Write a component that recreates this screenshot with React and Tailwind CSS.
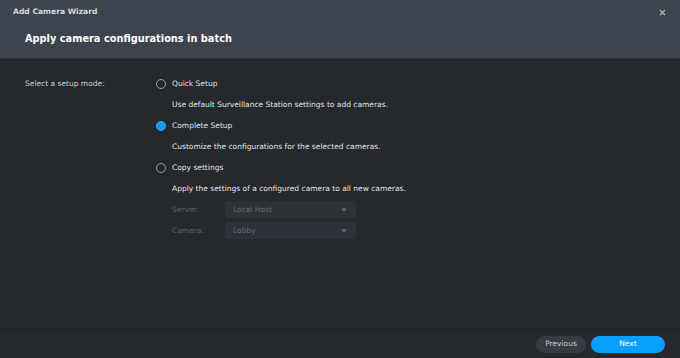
import React from "react";

const font = { fontFamily: '"DejaVu Sans", Verdana, sans-serif' };

function Radio({ checked }) {
  return checked ? (
    <span className="w-[10px] h-[10px] rounded-full bg-[#0a9bf5] border border-[#3aa9f0]" />
  ) : (
    <span className="w-[10px] h-[10px] rounded-full border border-[#9a9ea4]" />
  );
}

function Caret() {
  return (
    <svg width="6" height="4" viewBox="0 0 6 4">
      <path d="M0 0.5 L6 0.5 L3 3.5 Z" fill="#6a6e74" />
    </svg>
  );
}

export default function App() {
  return (
    <div className="w-[680px] h-[358px] bg-[#25282d] flex flex-col text-[#e4e5e7]" style={font}>
      <div className="h-[59px] bg-[#3e444d] flex flex-col border-b border-[#30343a]">
        <div className="h-[24px] flex items-center justify-between pl-[13px] pr-[14px]">
          <span className="text-[7.6px] font-bold text-[#d5d7da]">Add Camera Wizard</span>
          <svg width="7" height="7" viewBox="0 0 7 7">
            <path d="M1 1 L6 6 M6 1 L1 6" stroke="#aeb2b8" strokeWidth="1.4" />
          </svg>
        </div>
        <div className="h-[30px] flex items-center pl-[25px]">
          <span className="text-[9.8px] font-bold text-white">Apply camera configurations in batch</span>
        </div>
      </div>
      <div className="flex-1 flex pt-[14px] pl-[25px] text-[7.5px]">
        <div className="w-[131px] h-[21px] flex items-center text-[#d0d2d5]">Select a setup mode:</div>
        <div className="flex flex-col">
          <div className="h-[21px] flex items-center gap-[6px]"><Radio /><span>Quick Setup</span></div>
          <div className="h-[21px] flex items-center pl-[16px]">Use default Surveillance Station settings to add cameras.</div>
          <div className="h-[21px] flex items-center gap-[6px]"><Radio checked /><span>Complete Setup</span></div>
          <div className="h-[21px] flex items-center pl-[16px]">Customize the configurations for the selected cameras.</div>
          <div className="h-[21px] flex items-center gap-[6px]"><Radio /><span>Copy settings</span></div>
          <div className="h-[21px] flex items-center pl-[16px]">Apply the settings of a configured camera to all new cameras.</div>
          <div className="flex flex-col gap-[4px] pl-[16px] pt-[2px]">
            {[["Server:", "Local Host"], ["Camera:", "Lobby"]].map(([l, v]) => (
              <div key={l} className="flex items-center">
                <span className="w-[53px] text-[#60646a]">{l}</span>
                <div className="w-[131px] h-[17px] rounded-[2px] bg-[#2e3238] flex items-center justify-between pl-[8px] pr-[9px] text-[#6a6e74]">
                  <span>{v}</span>
                  <Caret />
                </div>
              </div>
            ))}
          </div>
        </div>
      </div>
      <div className="h-[30px] border-t border-[#1f2226] flex items-center justify-end gap-[5px] pr-[15px] pt-[1px]">
        <button className="w-[50px] h-[17px] rounded-full bg-[#383c42] text-[7.5px] text-[#c9cbce]">Previous</button>
        <button className="w-[74px] h-[17px] rounded-full bg-[#0a9ffb] text-[7.5px] text-white">Next</button>
      </div>
    </div>
  );
}
